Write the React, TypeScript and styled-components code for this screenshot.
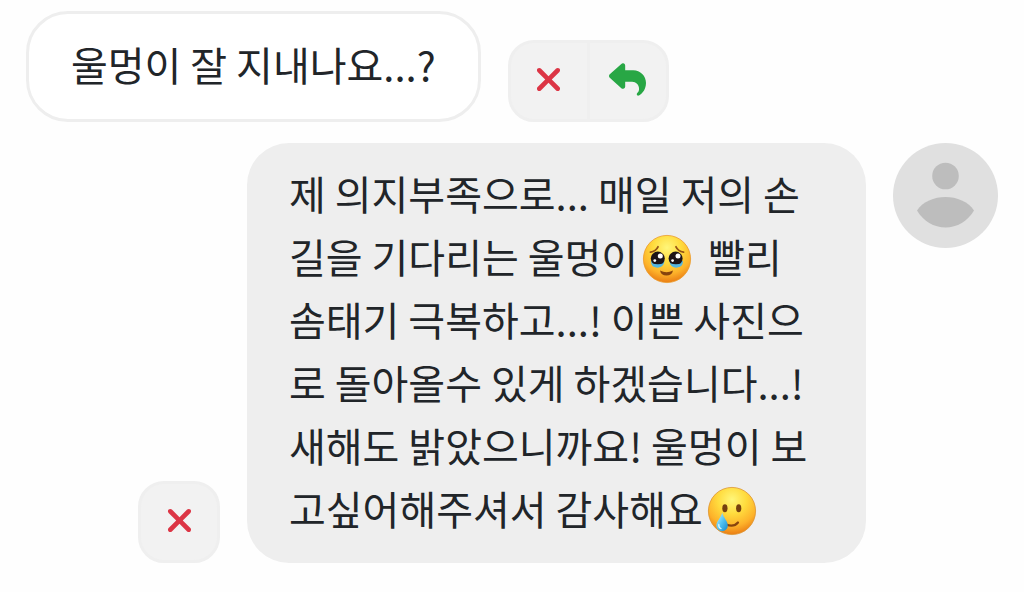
import React from 'react';
import styled, { createGlobalStyle } from 'styled-components';
import { FaReply, FaXmark } from 'react-icons/fa6';

const GlobalStyle = createGlobalStyle`
  * { box-sizing: border-box; }
  body {
    margin: 0;
    background: #fefefe;
    color: #212529;
    font-family: 'Noto Sans CJK KR', sans-serif;
  }
`;

const Thread = styled.main`
  display: flex;
  flex-direction: column;
  gap: 21px;
  padding: 11px 26px 28px;
`;

const MessageRow = styled.article<{ $own?: boolean }>`
  display: flex;
  align-items: flex-end;
  justify-content: ${(p) => (p.$own ? 'flex-end' : 'flex-start')};
  gap: 27px;
`;

const Bubble = styled.p<{ $filled?: boolean }>`
  margin: 0;
  padding: 19px 42px 23px;
  max-width: 619px;
  flex: ${(p) => (p.$filled ? '0 1 619px' : '0 1 auto')};
  border: ${(p) => (p.$filled ? 'none' : '3px solid #eeeeee')};
  border-radius: 42px;
  background: ${(p) => (p.$filled ? '#eeeeee' : '#ffffff')};
  font-size: 40px;
  line-height: 63px;
`;

const Actions = styled.div`
  display: flex;
  overflow: hidden;
  flex: none;
  border: 3px solid #efefef;
  border-radius: 26px;
  background: #f2f2f2;
`;

const ActionButton = styled.button<{ $tone: string }>`
  display: flex;
  align-items: center;
  justify-content: center;
  width: 76px;
  height: 76px;
  padding: 0 0 4px;
  border: 0;
  background: transparent;
  color: ${(p) => p.$tone};
  font-size: 37px;
  cursor: pointer;

  & + & {
    width: 79px;
    border-left: 3px solid #efefef;
  }
`;

const Avatar = styled.svg`
  flex: none;
  align-self: flex-start;
  width: 105px;
  height: 105px;
`;

const Emoji = styled.svg`
  width: 50px;
  height: 50px;
  margin: 0 7px 0 4px;
  vertical-align: -11px;
`;

const RED = '#dc3545';
const GREEN = '#28a745';

function FaceGradient({ id }: { id: string }) {
  return (
    <radialGradient id={id} cx="50%" cy="26%" r="74%">
      <stop offset="0" stopColor="#fff67a" />
      <stop offset="0.4" stopColor="#ffdc3e" />
      <stop offset="0.75" stopColor="#fdb22a" />
      <stop offset="1" stopColor="#ea7d14" />
    </radialGradient>
  );
}

function PleadingFace() {
  return (
    <Emoji viewBox="0 0 50 50" role="img" aria-label="🥹">
      <defs>
        <FaceGradient id="pleading" />
      </defs>
      <circle cx="25" cy="25" r="23.600" fill="url(#pleading)" stroke="#eb9a2a" strokeWidth="0.800" />
      <path d="M8.500 18.200Q14 17 16 12.800M34 12.800Q36 17 41.500 18.200" fill="none" stroke="#965315" strokeWidth="1.800" strokeLinecap="round" />
      <path d="M9 27Q9 33.500 15 33.500Q21.500 33 22.500 27ZM27.500 27Q28 33 34.500 33.500Q41 33.500 41 27Z" fill="#55b6e0" />
      <circle cx="15.800" cy="24.600" r="7" fill="#1d1418" />
      <circle cx="33.600" cy="24.600" r="7" fill="#1d1418" />
      <path d="M9.500 29Q16 31.500 22 29Q20 33.500 15.500 33.500Q11 33 9.500 29ZM27.800 29Q34 31.500 40 29Q38.500 33 34 33.500Q30 33.500 27.800 29Z" fill="#55b6e0" />
      <circle cx="18.300" cy="22" r="2.500" fill="#fff" />
      <circle cx="36" cy="22" r="2.500" fill="#fff" />
      <circle cx="12.800" cy="26.600" r="1.400" fill="#fff" />
      <circle cx="30.600" cy="26.600" r="1.400" fill="#fff" />
      <path d="M18 36.500Q24.500 40 31 36.500Q30 41.500 24.500 41.500T18 36.500Z" fill="#87440e" />
    </Emoji>
  );
}

function TearFace() {
  return (
    <Emoji viewBox="0 0 50 50" role="img" aria-label="🥲">
      <defs>
        <FaceGradient id="smiling" />
        <linearGradient id="drop" x1="0" y1="0" x2="1" y2="1">
          <stop offset="0" stopColor="#c4f2ff" />
          <stop offset="0.5" stopColor="#55c3f2" />
          <stop offset="1" stopColor="#1687cb" />
        </linearGradient>
      </defs>
      <circle cx="25" cy="25" r="23.600" fill="url(#smiling)" stroke="#dd942e" strokeWidth="0.800" />
      <ellipse cx="17.900" cy="22.200" rx="2.600" ry="4" fill="#75400f" />
      <ellipse cx="31.700" cy="22.200" rx="2.600" ry="4" fill="#75400f" />
      <path d="M19 38.500Q27 41.500 31 36.500" fill="none" stroke="#87440e" strokeWidth="2.200" strokeLinecap="round" />
      <path d="M15.200 26.500C16.500 32 20.800 35 20.800 39.500A5.700 5.700 0 0 1 9.400 39.500C9.400 35 14 32 15.200 26.500Z" fill="url(#drop)" />
      <path d="M11.800 38.500Q11.500 41.500 14 42.500" fill="none" stroke="#ddf8ff" strokeWidth="1.300" strokeLinecap="round" />
    </Emoji>
  );
}

export default function App() {
  return (
    <>
      <GlobalStyle />
      <Thread>
        <MessageRow>
          <Bubble>울멍이 잘 지내나요...?</Bubble>
          <Actions>
            <ActionButton type="button" aria-label="삭제" $tone={RED}>
              <FaXmark />
            </ActionButton>
            <ActionButton type="button" aria-label="답글" $tone={GREEN}>
              <FaReply />
            </ActionButton>
          </Actions>
        </MessageRow>

        <MessageRow $own>
          <Actions>
            <ActionButton type="button" aria-label="삭제" $tone={RED}>
              <FaXmark />
            </ActionButton>
          </Actions>
          <Bubble $filled>
            제 의지부족으로... 매일 저의 손
            <br />
            길을 기다리는 울멍이
            <PleadingFace /> 빨리
            <br />
            솜태기 극복하고...! 이쁜 사진으
            <br />
            로 돌아올수 있게 하겠습니다...!
            <br />
            새해도 밝았으니까요! 울멍이 보
            <br />
            고싶어해주셔서 감사해요
            <TearFace />
          </Bubble>
          <Avatar viewBox="0 0 105 105" role="img" aria-label="프로필">
            <circle cx="52.500" cy="52.500" r="52.500" fill="#e0e0e0" />
            <circle cx="52.500" cy="33" r="13.300" fill="#bdbdbd" />
            <path d="M24 67.500C30 58.500 41 54 52.500 54S75 58.500 81 67.500C75 78 64 84.500 52.500 84.500S30 78 24 67.500Z" fill="#bdbdbd" />
          </Avatar>
        </MessageRow>
      </Thread>
    </>
  );
}
